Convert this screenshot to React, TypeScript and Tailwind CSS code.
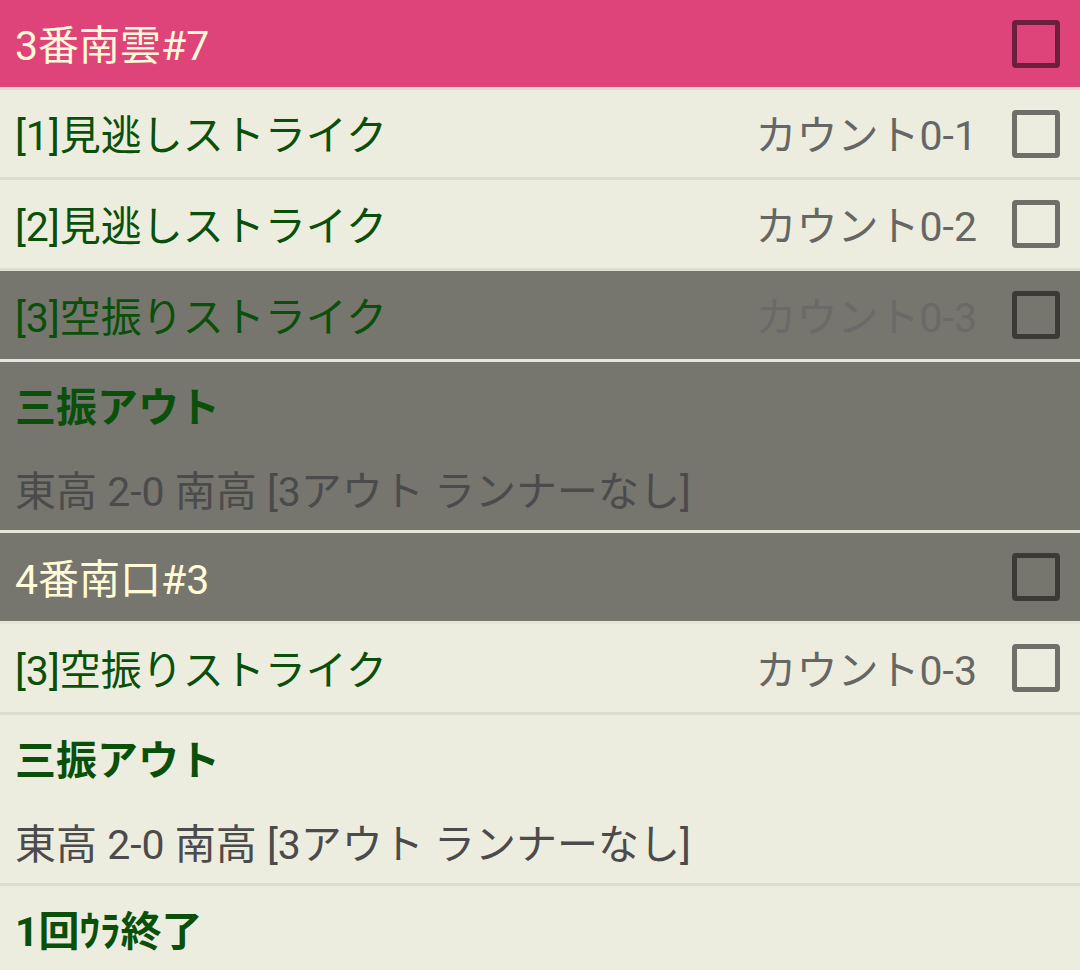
import React from "react";

const font = { fontFamily: 'Roboto, "Noto Sans CJK JP", sans-serif' };

type Tone = "pink" | "cream" | "gray";

function Box({ tone }: { tone: Tone }) {
  const color =
    tone === "pink"
      ? "border-[#6b1f3d]"
      : tone === "gray"
      ? "border-[#3b3b36]"
      : "border-[#6f6e68]";
  return (
    <div
      className={`w-[48px] h-[48px] shrink-0 rounded-[4px] border-[5px] ${color}`}
    />
  );
}

function PitchRow({
  label,
  count,
  tone,
  h,
}: {
  label: string;
  count: string;
  tone: Tone;
  h: string;
}) {
  const bg =
    tone === "gray"
      ? "bg-[#76766e] border-[#e6e6d6]"
      : "bg-[#ededdf] border-[#dcdcd0]";
  const countColor = tone === "gray" ? "text-[#6a6a68]" : "text-[#666664]";
  return (
    <div
      className={`flex items-center pl-[15px] pr-[20px] border-b-[3px] ${bg} ${h}`}
    >
      <span className="flex-1 text-[41px] leading-none pt-[6px] text-[#0a500a]">
        {label}
      </span>
      <span className={`text-[41px] leading-none pt-[6px] mr-[35px] ${countColor}`}>
        {count}
      </span>
      <Box tone={tone} />
    </div>
  );
}

function BatterRow({ name, tone, h }: { name: string; tone: Tone; h: string }) {
  const bg =
    tone === "pink"
      ? "bg-[#de4479] border-[#dcdcd0]"
      : "bg-[#76766e] border-[#e6e6d6]";
  return (
    <div
      className={`flex items-center pl-[15px] pr-[20px] border-b-[3px] ${bg} ${h}`}
    >
      <span className="flex-1 text-[41px] leading-none pt-[6px] text-[#fffbd6]">
        {name}
      </span>
      <Box tone={tone} />
    </div>
  );
}

function ResultRow({
  title,
  score,
  tone,
}: {
  title: string;
  score: string;
  tone: Tone;
}) {
  const bg =
    tone === "gray"
      ? "bg-[#76766e] border-[#e6e6d6]"
      : "bg-[#ededdf] border-[#dcdcd0]";
  return (
    <div className={`flex flex-col pl-[15px] border-b-[3px] h-[171px] ${bg}`}>
      <div className="flex items-center h-[86px] pt-[6px] text-[41px] leading-none font-bold text-[#0a500a]">
        {title}
      </div>
      <div className="flex items-center h-[82px] pt-[6px] text-[41px] leading-none text-[#4b4b4b]">
        {score}
      </div>
    </div>
  );
}

export default function App() {
  return (
    <div className="w-[1080px] h-[970px] overflow-hidden bg-[#ededdf]" style={font}>
      <BatterRow name="3番南雲#7" tone="pink" h="h-[90px]" />
      <PitchRow label="[1]見逃しストライク" count="カウント0-1" tone="cream" h="h-[90px]" />
      <PitchRow label="[2]見逃しストライク" count="カウント0-2" tone="cream" h="h-[91px]" />
      <PitchRow label="[3]空振りストライク" count="カウント0-3" tone="gray" h="h-[91px]" />
      <ResultRow title="三振アウト" score="東高 2-0 南高 [3アウト ランナーなし]" tone="gray" />
      <BatterRow name="4番南口#3" tone="gray" h="h-[91px]" />
      <PitchRow label="[3]空振りストライク" count="カウント0-3" tone="cream" h="h-[91px]" />
      <ResultRow title="三振アウト" score="東高 2-0 南高 [3アウト ランナーなし]" tone="cream" />
      <div className="flex items-center pl-[15px] h-[86px] pt-[6px] text-[41px] leading-none font-bold text-[#0a500a]">
        1回ｳﾗ終了
      </div>
    </div>
  );
}
